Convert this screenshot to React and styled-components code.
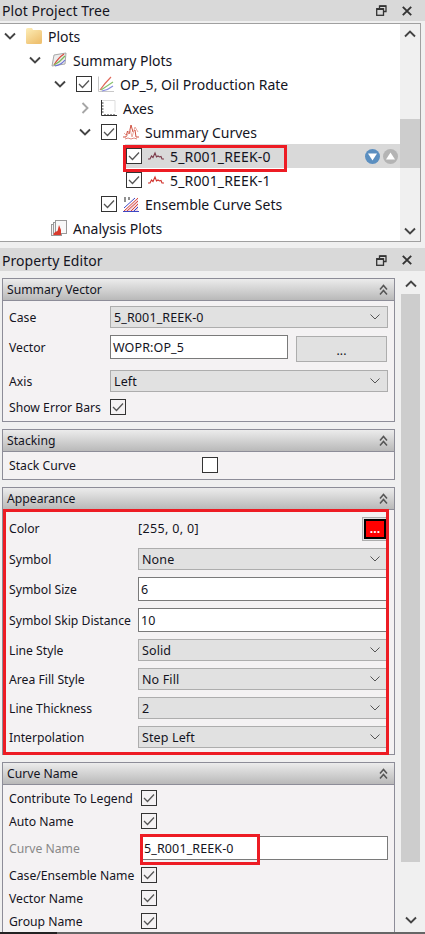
import React from 'react';
import styled, { createGlobalStyle } from 'styled-components';

const GlobalStyle = createGlobalStyle`
  html, body { margin: 0; padding: 0; background: #f0f0f0; }
  body { font-family: "Noto Sans", "Open Sans", sans-serif; color: #14141e; }
`;

const Page = styled.div`
  width: 425px;
  height: 934px;
  overflow: hidden;
  display: flex;
  flex-direction: column;
`;

/* dock title bars */
const TitleBar = styled.div`
  height: ${props => props.$h}px;
  margin-top: ${props => props.$top || 0}px;
  box-sizing: border-box;
  flex: none;
  background: #d9d9d9;
  display: flex;
  align-items: center;
  padding: ${props => (props.$top ? '1px' : 0)} 13px 0 2px;
  font-size: 14px;
  letter-spacing: 0.05px;
`;

const TitleText = styled.span`
  flex: 1;
`;

const TitleIcons = styled.div`
  display: flex;
  align-items: center;
  gap: 15px;
`;

/* tree panel */
const TreePanel = styled.div`
  width: 420px;
  height: 217px;
  margin-top: 2px;
  flex: none;
  display: flex;
  background: #fff;
  border: 1px solid #a0a0a0;
  border-left: none;
`;

const TreeRows = styled.div`
  flex: 1;
`;

const Row = styled.div`
  height: 24px;
  display: flex;
  align-items: center;
  padding-left: ${props => props.$level * 25}px;
  font-size: 14px;
`;

const ChevronSlot = styled.div`
  width: 20px;
  height: 24px;
  flex: none;
  display: flex;
  align-items: center;
  justify-content: center;
`;

const RowContent = styled.div`
  position: relative;
  flex: 1;
  height: 24px;
  margin-left: 5px;
  padding-left: 1px;
  display: flex;
  align-items: center;
  gap: 6px;
  background: ${props => (props.$selected ? '#d9d9d9' : 'transparent')};
`;

const RowText = styled.span`
  letter-spacing: ${props => (props.$wide ? '0.15px' : 0)};
`;

const RowActions = styled.div`
  margin-left: auto;
  margin-right: 2px;
  display: flex;
  gap: 3px;
`;

const Highlight = styled.div`
  position: absolute;
  left: ${props => props.$left}px;
  top: ${props => props.$top}px;
  width: ${props => props.$width}px;
  height: ${props => props.$height}px;
  box-sizing: border-box;
  border: 3px solid #ed1c24;
  pointer-events: none;
  z-index: 2;
`;

/* scroll bars */
const Scroll = styled.div`
  width: 20px;
  flex: none;
  display: flex;
  flex-direction: column;
  background: #f0f0f0;
`;

const EditorScroll = styled(Scroll)`
  width: 19px;
  margin: 3px 0 2px 6px;
`;

const ScrollArrow = styled.div`
  height: 20px;
  flex: none;
  display: flex;
  align-items: center;
  justify-content: center;
`;

const ScrollTrack = styled.div`
  flex: 1;
`;

const ScrollThumb = styled.div`
  height: ${props => props.$h}px;
  margin-top: ${props => props.$top}px;
  background: #cdcdcd;
`;

/* property editor */
const EditorArea = styled.div`
  flex: 1;
  min-height: 0;
  display: flex;
  overflow: hidden;
`;

const Groups = styled.div`
  width: 393px;
  margin: 7px 0 0 2px;
  flex: none;
  display: flex;
  flex-direction: column;
  gap: 7px;
`;

const Group = styled.section`
  flex: none;
  border: 1px solid #8d8d98;
  background: #f4f2f3;
`;

const GroupHeader = styled.header`
  height: 21px;
  display: flex;
  align-items: center;
  justify-content: space-between;
  padding: 0 6px 0 4px;
  font-size: 12.2px;
  background: linear-gradient(#ececec, #b9b9b9);
  border-bottom: 1px solid #8d8d98;
`;

const GroupBody = styled.div`
  position: relative;
  display: flex;
  flex-direction: column;
  gap: 7px;
  padding: 5px 6px 6px 6px;
`;

const Field = styled.div`
  height: ${props => props.$h}px;
  display: flex;
  align-items: ${props => props.$align || 'center'};
  font-size: 12.2px;
`;

const Label = styled.div`
  width: ${props => props.$w}px;
  flex: none;
  white-space: nowrap;
  color: ${props => (props.$disabled ? '#888' : 'inherit')};
  line-height: ${props => props.$line || 'normal'};
`;

const Combo = styled.div`
  flex: 1;
  height: 22px;
  box-sizing: border-box;
  display: flex;
  align-items: center;
  justify-content: space-between;
  padding: 0 7px 0 3px;
  font-size: 12.5px;
  letter-spacing: 0.12px;
  background: #e1e1e1;
  border: 1px solid #adadad;
`;

const TextInput = styled.div`
  flex: ${props => (props.$w ? 'none' : 1)};
  width: ${props => (props.$w ? `${props.$w}px` : 'auto')};
  height: 24px;
  box-sizing: border-box;
  display: flex;
  align-items: center;
  padding-left: 2px;
  font-size: 12.5px;
  letter-spacing: 0.12px;
  background: #fff;
  border: 1px solid #7a7a7a;
`;

const DotsButton = styled.div`
  width: 91px;
  height: 26px;
  margin: 1px 0 0 8px;
  padding-top: 2px;
  box-sizing: border-box;
  display: flex;
  align-items: center;
  justify-content: center;
  background: #e1e1e1;
  border: 1px solid #adadad;
`;

const ColorValue = styled.span`
  flex: 1;
  font-size: 12.5px;
  letter-spacing: 0.35px;
`;

const ColorButton = styled.div`
  width: 26px;
  height: 24px;
  margin-top: 1px;
  box-sizing: border-box;
  padding: 1px;
  background: #e1e1e1;
  border: 1px solid #adadad;
`;

const ColorSwatch = styled.div`
  height: 100%;
  box-sizing: border-box;
  display: flex;
  align-items: center;
  justify-content: center;
  color: #fff;
  font-weight: 700;
  background: #ff0000;
  border: 2px solid #000;
`;

const Box = styled.span`
  width: 16px;
  height: 16px;
  flex: none;
  box-sizing: border-box;
  display: flex;
  align-items: center;
  justify-content: center;
  background: ${props => (props.$tree ? '#fff' : 'transparent')};
  border: 1px solid #333;
`;

const Footer = styled.div`
  height: 2px;
  flex: none;
  background: #666;
`;

const FooterDark = styled.div`
  width: 57px;
  height: 100%;
  background: #222;
`;

/* drawings */
const Chevron = ({ dir = 'down', color = '#444', size = 12 }) => {
  const paths = {
    down: 'M1 3.5 L6 8.5 L11 3.5',
    up: 'M1 8.5 L6 3.5 L11 8.5',
    right: 'M3.5 1 L8.5 6 L3.5 11',
  };
  return (
    <svg width={size} height={size} viewBox="0 0 12 12" fill="none">
      <path d={paths[dir]} stroke={color} strokeWidth="1.9" />
    </svg>
  );
};

const ComboArrow = () => (
  <svg width="10" height="6" viewBox="0 0 10 6" fill="none">
    <path d="M0.5 0.5 L5 5 L9.5 0.5" stroke="#555" strokeWidth="1" />
  </svg>
);

const CollapseIcon = () => (
  <svg width="9" height="12" viewBox="0 0 9 12" fill="none">
    <path d="M1 5.5 L4.5 1.5 L8 5.5 M1 10.5 L4.5 6.5 L8 10.5" stroke="#555" strokeWidth="1.5" />
  </svg>
);

const Tick = () => (
  <svg width="12" height="10" viewBox="0 0 12 10" fill="none">
    <path d="M1 5 L4.5 8.5 L11 1.5" stroke="#555" strokeWidth="1.3" />
  </svg>
);

const FloatIcon = () => (
  <svg width="11" height="11" viewBox="0 0 11 11" fill="none">
    <path d="M3.5 3 V0.8 H10 V6.5 H8" stroke="#333" strokeWidth="1.3" />
    <rect x="0.7" y="3.7" width="6.8" height="6.6" stroke="#333" strokeWidth="1.3" />
    <path d="M1 4.2 H7 M4 1.2 H10" stroke="#333" strokeWidth="1.4" />
  </svg>
);

const CloseIcon = () => (
  <svg width="10" height="10" viewBox="0 0 10 10" fill="none">
    <path d="M0.8 0.8 L9.2 9.2 M9.2 0.8 L0.8 9.2" stroke="#333" strokeWidth="1.9" />
  </svg>
);

const RoundArrow = ({ up, color }) => (
  <svg width="15" height="15" viewBox="0 0 15 15">
    <circle cx="7.5" cy="7.5" r="7.5" fill={color} />
    <path d={up ? 'M7.5 3.5 L12 10.5 H3 Z' : 'M3 4.5 H12 L7.5 11.5 Z'} fill="#fff" />
  </svg>
);

const FolderIcon = () => (
  <svg width="16" height="16" viewBox="0 0 16 16">
    <defs>
      <linearGradient id="folder" x1="0" y1="0" x2="0.6" y2="1">
        <stop offset="0" stopColor="#fdeeb8" />
        <stop offset="1" stopColor="#efc272" />
      </linearGradient>
    </defs>
    <path d="M0 1.5 Q0 0 1.5 0 H6 L7 2 H14.5 Q16 2 16 3.5 V14.5 Q16 16 14.5 16 H1.5 Q0 16 0 14.5 Z" fill="url(#folder)" />
  </svg>
);

const PlotsIcon = () => (
  <svg width="16" height="16" viewBox="0 0 16 16" fill="none">
    <path d="M3 3 L15 1 L14 12 L1 14 Z" fill="#ececec" stroke="#a8a8a8" />
    <path d="M3 13 Q7 6 13 2" stroke="#d84a3c" strokeWidth="1.2" />
    <path d="M3 13 Q9 10 14 4" stroke="#7cb85a" strokeWidth="1.2" />
    <path d="M4 14 Q10 13 14 8" stroke="#6a72d8" strokeWidth="1.2" />
  </svg>
);

const CurveIcon = () => (
  <svg width="16" height="16" viewBox="0 0 16 16" fill="none">
    <path d="M0.5 0.5 V15.5 H16" stroke="#c8c8c8" />
    <path d="M2 14 Q7 7 13 1" stroke="#e0695a" strokeWidth="1.2" />
    <path d="M3 14 Q9 10 15 6" stroke="#86c06a" strokeWidth="1.2" />
    <path d="M4 15 Q10 14 15 10" stroke="#8a8ee0" strokeWidth="1.2" />
  </svg>
);

const AxesIcon = () => (
  <svg width="16" height="16" viewBox="0 0 16 16" fill="none">
    <path d="M0.5 0 V15.5 H16" stroke="#333" />
    <path d="M1 3 H2.5 M1 6 H2.5 M1 9 H2.5 M1 12 H2.5 M4 14 V15 M7 14 V15 M10 14 V15 M13 14 V15" stroke="#333" />
    <path d="M1 0.5 H14 V12" stroke="#ddd" />
  </svg>
);

const SummaryCurvesIcon = () => (
  <svg width="16" height="16" viewBox="0 0 16 16" fill="none">
    <path d="M0 13 H3 L4.5 7 L6 10 L8 1 L10 8 L12 6 L13 13 H16" stroke="#d0503f" strokeWidth="1" />
    <path d="M1 9 L4 12 L7 5 L9 13 L12 3 L15 8" stroke="#eaa79e" strokeWidth="1" />
    <path d="M2 15 L5 14 L8 15 L11 14 L14 15" stroke="#e08a80" strokeWidth="1" />
  </svg>
);

const MiniCurve = ({ color }) => (
  <svg width="16" height="16" viewBox="0 0 16 16" fill="none">
    <path d="M0 11 H2 L3.5 8 L5 9.5 L7 5 L8.5 9 L10 8 L11.5 9 L13 8.5 L14 11 H16" stroke={color} strokeWidth="1.1" />
  </svg>
);

const EnsembleIcon = () => (
  <svg width="16" height="16" viewBox="0 0 16 16" fill="none">
    <path d="M1 15 L15 2 V15 Z" fill="#f3d9e0" />
    <path d="M2 1 V6 M6 1 V4" stroke="#555" strokeWidth="1.3" />
    <path d="M1 15 L15 2 M4 15 L15 5 M8 15 L15 8" stroke="#d84a3c" strokeWidth="1" />
    <path d="M0 15.5 H16 M1 12 L12 2 M11 15 L15 11" stroke="#3f48c4" strokeWidth="1" />
  </svg>
);

const AnalysisIcon = () => (
  <svg width="16" height="16" viewBox="0 0 16 16" fill="none">
    <rect x="0.5" y="4.5" width="10" height="11" fill="#f4f4f4" stroke="#999" />
    <rect x="2.5" y="2.5" width="10" height="11" fill="#f4f4f4" stroke="#999" />
    <rect x="4.5" y="0.5" width="11" height="13" fill="#f8f8f8" stroke="#999" />
    <path d="M2 15 H10 V10 L8 5 L6.5 11 L4 12 Z" fill="#d83a2c" />
  </svg>
);

const treeRows = [
  { level: 0, chevron: 'down', icon: <FolderIcon />, text: 'Plots' },
  { level: 1, chevron: 'down', icon: <PlotsIcon />, text: 'Summary Plots' },
  { level: 2, chevron: 'down', check: true, icon: <CurveIcon />, text: 'OP_5, Oil Production Rate' },
  { level: 3, chevron: 'right', icon: <AxesIcon />, text: 'Axes' },
  { level: 3, chevron: 'down', check: true, icon: <SummaryCurvesIcon />, text: 'Summary Curves' },
  { level: 4, check: true, icon: <MiniCurve color="#7c3a4a" />, text: '5_R001_REEK-0', selected: true },
  { level: 4, check: true, icon: <MiniCurve color="#d0302a" />, text: '5_R001_REEK-1' },
  { level: 3, check: true, icon: <EnsembleIcon />, text: 'Ensemble Curve Sets' },
  { level: 1, icon: <AnalysisIcon />, text: 'Analysis Plots' },
];

function DockTitle({ h, top, children }) {
  return (
    <TitleBar $h={h} $top={top}>
      <TitleText>{children}</TitleText>
      <TitleIcons>
        <FloatIcon />
        <CloseIcon />
      </TitleIcons>
    </TitleBar>
  );
}

function Check({ tree }) {
  return <Box $tree={tree}><Tick /></Box>;
}

function SelectField({ label, w, value }) {
  return (
    <Field $h={22}>
      <Label $w={w}>{label}</Label>
      <Combo>
        <span>{value}</span>
        <ComboArrow />
      </Combo>
    </Field>
  );
}

function CheckField({ label, w, checked = true }) {
  return (
    <Field $h={16}>
      <Label $w={w}>{label}</Label>
      {checked ? <Check /> : <Box $tree />}
    </Field>
  );
}

function InputField({ label, w, value, disabled }) {
  return (
    <Field $h={24}>
      <Label $w={w} $disabled={disabled}>{label}</Label>
      <TextInput>{value}</TextInput>
    </Field>
  );
}

function PropertyGroup({ title, children }) {
  return (
    <Group>
      <GroupHeader>
        <span>{title}</span>
        <CollapseIcon />
      </GroupHeader>
      <GroupBody>{children}</GroupBody>
    </Group>
  );
}

export default function App() {
  return (
    <Page>
      <GlobalStyle />
      <DockTitle h={21}>Plot Project Tree</DockTitle>

      <TreePanel>
        <TreeRows>
          {treeRows.map(row => (
            <Row key={row.text} $level={row.level}>
              <ChevronSlot>
                {row.chevron && (
                  <Chevron dir={row.chevron} color={row.chevron === 'right' ? '#a6a6a6' : '#444'} />
                )}
              </ChevronSlot>
              <RowContent $selected={row.selected}>
                {row.check && <Check tree />}
                {row.icon}
                <RowText $wide={row.level === 4}>{row.text}</RowText>
                {row.selected && (
                  <>
                    <RowActions>
                      <RoundArrow color="#5b8fc0" />
                      <RoundArrow up color="#b4b4b4" />
                    </RowActions>
                    <Highlight $left={-2} $top={1} $width={164} $height={27} />
                  </>
                )}
              </RowContent>
            </Row>
          ))}
        </TreeRows>
        <Scroll>
          <ScrollArrow><Chevron dir="up" /></ScrollArrow>
          <ScrollTrack><ScrollThumb $top={75} $h={49} /></ScrollTrack>
          <ScrollArrow><Chevron /></ScrollArrow>
        </Scroll>
      </TreePanel>

      <DockTitle h={23} top={6}>Property Editor</DockTitle>

      <EditorArea>
        <Groups>
          <PropertyGroup title="Summary Vector">
            <SelectField label="Case" w={101} value="5_R001_REEK-0" />
            <Field $h={28} $align="flex-start">
              <Label $w={101} $line="25px">Vector</Label>
              <TextInput $w={178}>WOPR:OP_5</TextInput>
              <DotsButton>...</DotsButton>
            </Field>
            <SelectField label="Axis" w={101} value="Left" />
            <CheckField label="Show Error Bars" w={101} />
          </PropertyGroup>

          <PropertyGroup title="Stacking">
            <CheckField label="Stack Curve" w={193} checked={false} />
          </PropertyGroup>

          <PropertyGroup title="Appearance">
            <Field $h={26}>
              <Label $w={129}>Color</Label>
              <ColorValue>[255, 0, 0]</ColorValue>
              <ColorButton><ColorSwatch>...</ColorSwatch></ColorButton>
            </Field>
            <SelectField label="Symbol" w={129} value="None" />
            <InputField label="Symbol Size" w={129} value="6" />
            <InputField label="Symbol Skip Distance" w={129} value="10" />
            <SelectField label="Line Style" w={129} value="Solid" />
            <SelectField label="Area Fill Style" w={129} value="No Fill" />
            <SelectField label="Line Thickness" w={129} value="2" />
            <SelectField label="Interpolation" w={129} value="Step Left" />
            <Highlight $left={0} $top={-1} $width={386} $height={246} />
          </PropertyGroup>

          <PropertyGroup title="Curve Name">
            <CheckField label="Contribute To Legend" w={132} />
            <CheckField label="Auto Name" w={132} />
            <InputField label="Curve Name" w={132} value="5_R001_REEK-0" disabled />
            <CheckField label="Case/Ensemble Name" w={132} />
            <CheckField label="Vector Name" w={132} />
            <CheckField label="Group Name" w={132} />
            <Highlight $left={137} $top={49} $width={120} $height={31} />
          </PropertyGroup>
        </Groups>
        <EditorScroll>
          <ScrollArrow><Chevron dir="up" /></ScrollArrow>
          <ScrollTrack><ScrollThumb $top={0} $h={568} /></ScrollTrack>
          <ScrollArrow><Chevron /></ScrollArrow>
        </EditorScroll>
      </EditorArea>

      <Footer><FooterDark /></Footer>
    </Page>
  );
}
